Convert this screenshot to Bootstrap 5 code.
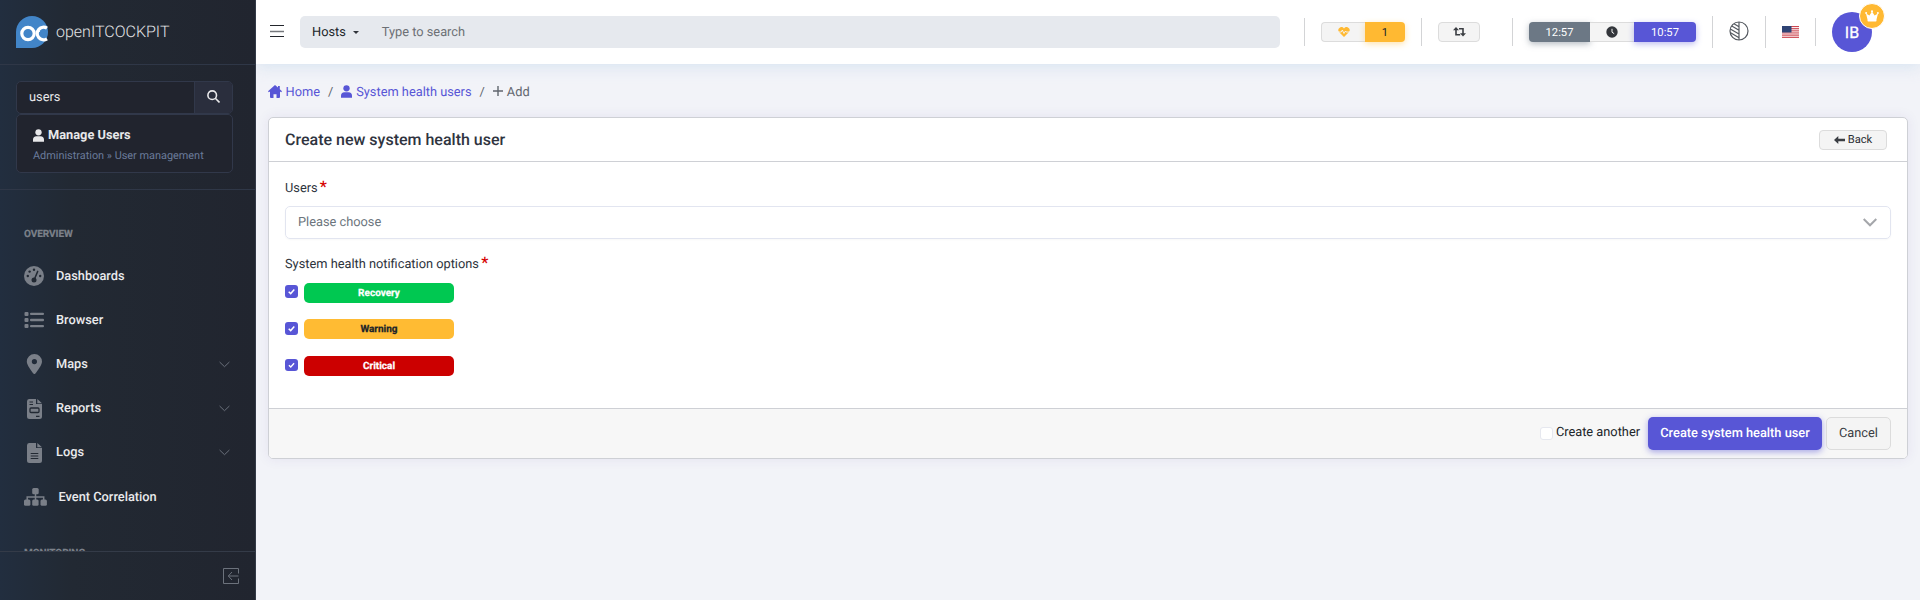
<!DOCTYPE html>
<html lang="en">
<head>
<meta charset="utf-8">
<title>Create new system health user</title>
<link href="https://cdn.jsdelivr.net/npm/bootstrap@5.3.0/dist/css/bootstrap.min.css" rel="stylesheet">
<style>
body{font-family:Roboto,"Liberation Sans",sans-serif;font-size:12.8px;line-height:21px;letter-spacing:0;text-rendering:geometricPrecision;color:#212529;background:#f2f3f8;height:600px;overflow:hidden}
svg{display:block;flex:none}
.sidebar{position:relative;z-index:2;width:256px;height:600px;flex:none;background:linear-gradient(90deg,#222e3f 0,#222933 72px,#21252f 100%);border-right:1px solid #343a47;color:#e8e8ea}
.brand{height:65px;border-bottom:1px solid #2f3747;padding:16px 16px 17px}
.brand span{font-size:16px;margin-left:8px;letter-spacing:0;color:#e3e4e6;font-weight:300}
.filter{height:125px;padding:16px 22px 0 16px;border-bottom:1px solid #2f3747}
.filter .field{height:33px;border:1px solid #31384a;border-radius:5px;overflow:hidden;background:#21242e}
.filter .go{width:38px;background:#2a2e3d;border-left:1px solid #31384a}
.filter .result{height:59px;border:1px solid #31384a;border-radius:5px;background:#21242e;padding:11px 16px}
.result small{font-size:10.9px;color:#6a7b9a;line-height:16px}
.menu{height:361px;overflow:hidden;padding-top:36px}
.cap{font-size:10px;font-weight:700;color:#7c818a;padding-left:24px;line-height:18px;-webkit-text-stroke:.2px;letter-spacing:-.05px}
.menu .entry{height:44.2px;padding:0 25px 0 24px;color:#e9eaec;text-decoration:none;font-weight:500;letter-spacing:0}
.entry .ic{width:32px;color:#7a7f88}
.entry .chev{color:#6a707b}
.foot{height:49px;border-top:1px solid #343b48;padding:0 16px}
.topbar{height:64px;background:#fff;box-shadow:0 3px 14px rgba(186,210,232,.45);padding:0 36px 0 14px;position:relative}
.search{width:980px;height:32px;background:#e6e9ee;border-radius:5px;padding:0 12px;margin-left:16px}
.caret{border:3px solid transparent;border-top-color:#30343b;border-bottom:0;margin-left:7px}
.vr-line{width:1px;height:28px;background:#d3d4d6}
.tall{height:32px}
.pill{height:20px;font-size:11.2px;border-radius:4px;font-weight:400}
.lite{background:#f4f4f4;border:1px solid #dcdcdc;color:#3b3e43}
.avatar{width:40px;height:40px;background:#5856d6;color:#fff;font-size:16px;font-weight:400;border-radius:50%;position:relative}
.crown{position:absolute;left:27px;top:-9px;width:26px;height:26px;background:#ffb932;border:1px solid #fff;border-radius:50%}
.crumbs{height:20px;margin:18px 0 0 12px;color:#61666e}
.crumbs a{color:#5856d6;text-decoration:none}
.panel{margin:15px 12px 0;height:342px;border:1px solid #ced0d5;border-radius:5px;background:#fff;box-shadow:0 0 13px rgba(62,44,140,.08);overflow:hidden}
.phead{height:44px;border-bottom:1px solid #ced0d5;padding:0 20px 0 16px}
.phead h1{font-size:16px;font-weight:500;margin:0;color:#2f3440;letter-spacing:0}
.pbody{height:246px;padding:16px}
.pbody label{height:20px;line-height:21px;color:#2d333c;display:block}
.ast{color:#d60000;font-size:16px;line-height:0;font-weight:500;position:relative;top:0;margin-left:-1px}
.choose{height:33px;border:1px solid #e2e5f0;border-radius:5px;padding:0 13px 1px 12px;color:#6c757d;margin-top:8px;box-shadow:0 1px 2px rgba(0,0,0,.03)}
.box{width:13px;height:13px;border-radius:3px;background:#5856d6}
.tag{width:150px;height:20px;border-radius:5px;margin-left:6px;font-size:10px;font-weight:700;-webkit-text-stroke:.25px}
.pfoot{height:50px;background:#f7f7f7;border-top:1px solid #ced0d5;padding:0 16px}
.act{height:33px;border-radius:5px;font-weight:500;letter-spacing:0}
</style>
<script src="https://cdn.jsdelivr.net/npm/bootstrap@5.3.0/dist/js/bootstrap.bundle.min.js"></script>
</head>
<body>
<div class="d-flex">
<aside class="sidebar">
  <div class="brand d-flex align-items-center">
    <svg width="32" height="32" viewBox="0 0 32 32"><path d="M16 0a16 16 0 1 1 0 32H0V16A16 16 0 0 1 16 0" fill="#4285c8"/><circle cx="12" cy="17.5" r="6.2" fill="none" stroke="#fff" stroke-width="3.2"/><path d="M31 12.2a6.3 6.3 0 1 0 0 10.6" fill="none" stroke="#fff" stroke-width="3.2"/><path d="M18.2 15v5M20 15.3h4M22 15.3v5" stroke="#fff" stroke-width="1"/></svg>
    <span>openITCOCKPIT</span>
  </div>
  <div class="filter">
    <div class="field d-flex"><div class="flex-grow-1 d-flex align-items-center ps-2"><span class="ms-1">users</span></div>
      <div class="go d-flex align-items-center justify-content-center"><svg width="13" height="13" viewBox="0 0 13 13" fill="none" stroke="#e8e8ea" stroke-width="1.6" style="margin-top:-2px"><circle cx="5.2" cy="5.2" r="4.3"/><path d="m8.3 8.3 4.2 4.2"/></svg></div></div>
    <div class="result">
      <div class="d-flex align-items-center fw-bold" style="height:18px"><svg width="11" height="13" viewBox="0 0 14 16" fill="currentColor" style="margin-right:4px"><circle cx="7" cy="4" r="4"/><path d="M0 16v-2.500a4.500 4.500 0 0 1 4.500-4.500h5a4.500 4.500 0 0 1 4.500 4.500V16z"/></svg>Manage Users</div>
      <small class="d-block mt-1">Administration » User management</small>
    </div>
  </div>
  <nav class="menu">
    <div class="cap">OVERVIEW</div>
    <div style="height:10px"></div>
    <a class="entry d-flex align-items-center"><span class="ic"><svg width="20" height="20" viewBox="0 0 20 20"><circle cx="10" cy="10" r="10" fill="currentColor"/><g fill="#222933"><circle cx="3.800" cy="10" r="1.200"/><circle cx="5.600" cy="5.600" r="1.200"/><circle cx="10" cy="3.800" r="1.200"/><circle cx="16.200" cy="10" r="1.200"/><circle cx="10" cy="14" r="2.500"/></g><path d="m10.500 13 3.200-7.600" stroke="#222933" stroke-width="1.500" stroke-linecap="round"/></svg></span>Dashboards</a>
    <a class="entry d-flex align-items-center"><span class="ic"><svg width="20" height="18" viewBox="0 0 20 18" fill="currentColor"><rect x=".5" y="1" width="4" height="4" rx="1"/><rect x=".5" y="7" width="4" height="4" rx="1"/><rect x=".5" y="13" width="4" height="4" rx="1"/><rect x="6" y="1.700" width="14" height="2.400" rx="1"/><rect x="6" y="7.800" width="14" height="2.400" rx="1"/><rect x="6" y="13.900" width="14" height="2.400" rx="1"/></svg></span>Browser</a>
    <a class="entry d-flex align-items-center"><span class="ic"><svg width="20" height="20" viewBox="0 0 20 20" fill="currentColor"><path fill-rule="evenodd" d="M11.400 19.600C13.400 17.100 18 11 18 7.600a7.600 7.600 0 0 0-15.200 0c0 3.400 4.600 9.500 6.600 12q1 1 2 0zM10.400 5a2.600 2.600 0 1 1 0 5.200 2.600 2.600 0 0 1 0-5.200"/></svg></span>Maps<svg class="chev ms-auto" width="11" height="7" viewBox="0 0 11 7" fill="none" stroke="currentColor"><path d="m.6 1 4.900 4.700L10.400 1"/></svg></a>
    <a class="entry d-flex align-items-center"><span class="ic"><svg width="20" height="20" viewBox="0 0 20 20"><path d="M5 0h7v5h6v12.500a2.500 2.500 0 0 1-2.500 2.500h-10A2.500 2.500 0 0 1 3 17.500v-15A2.500 2.500 0 0 1 5 0M13.300 0 18 4.200h-4.700z" fill="currentColor"/><path d="M5.500 3H9M5.500 5.500H9M12 17.300h3.500" stroke="#222933" stroke-width="1.200"/><rect x="6" y="9" width="9" height="4.500" rx="1" fill="none" stroke="#222933" stroke-width="1.300"/></svg></span>Reports<svg class="chev ms-auto" width="11" height="7" viewBox="0 0 11 7" fill="none" stroke="currentColor"><path d="m.6 1 4.900 4.700L10.400 1"/></svg></a>
    <a class="entry d-flex align-items-center"><span class="ic"><svg width="20" height="20" viewBox="0 0 20 20"><path d="M5 0h7v5h6v12.500a2.500 2.500 0 0 1-2.500 2.500h-10A2.500 2.500 0 0 1 3 17.500v-15A2.500 2.500 0 0 1 5 0M13.300 0 18 4.200h-4.700z" fill="currentColor"/><path d="M6.700 10.500h7.600M6.700 13h7.600M6.700 15.500h7.600" stroke="#222933" stroke-width="1.200"/></svg></span>Logs<svg class="chev ms-auto" width="11" height="7" viewBox="0 0 11 7" fill="none" stroke="currentColor"><path d="m.6 1 4.900 4.700L10.400 1"/></svg></a>
    <a class="entry d-flex align-items-center"><span class="ic" style="width:34.500px"><svg width="23" height="18" viewBox="0 0 23 18" fill="currentColor"><rect x="8.200" width="6.500" height="6.300" rx="1.500"/><rect y="11.500" width="6.400" height="6.300" rx="1.500"/><rect x="8.200" y="11.500" width="6.400" height="6.300" rx="1.500"/><rect x="16.500" y="11.500" width="6.400" height="6.300" rx="1.500"/><path d="M3.200 12V9h16.500v3M11.500 5v7" fill="none" stroke="currentColor" stroke-width="1.500"/></svg></span>Event Correlation</a>
    <div style="height:26px"></div>
    <div class="cap">MONITORING</div>
  </nav>
  <div class="foot d-flex align-items-center justify-content-end"><svg width="16" height="16" viewBox="0 0 16 16" fill="none" stroke="#6c727c"><path d="M15.500 5.500v-5H.5v15h15v-5M15.500 8H5.500M9 4 5.300 8 9 12"/></svg></div>
</aside>
<div class="flex-grow-1" style="min-width:0">
  <header class="topbar d-flex align-items-center">
    <svg width="14" height="14" viewBox="0 0 14 14" stroke="#23262c" style="margin-top:-3px"><path d="M0 1.500h14M0 12.500h14"/><path d="M0 7.500h14" stroke="#75787d" stroke-width="1.500"/></svg>
    <div class="search d-flex align-items-center"><span style="color:#212529">Hosts</span><span class="caret"></span><span style="margin-left:23px;color:#6c7075">Type to search</span></div>
    <span class="vr-line" style="margin-left:24px"></span>
    <div class="d-flex" style="margin-left:16px"><span class="pill lite rounded-end-0 d-flex align-items-center justify-content-center" style="width:44px;border-right:0"><svg width="12" height="10" viewBox="0 0 12 10"><path d="M6 10 1 5A3 3 0 0 1 6 1.400 3 3 0 0 1 11 5z" fill="#ffb932"/><path d="M0 5h3.300l1-2 1.700 3.500L7.500 4l.5 1h4" fill="none" stroke="#f4f4f4" stroke-width=".9"/></svg></span><span class="pill rounded-start-0 d-flex align-items-center justify-content-center" style="width:40px;background:#ffb932;color:#212529;box-shadow:0 2px 6px rgba(255,185,50,.4)">1</span></div>
    <span class="vr-line" style="margin-left:16px"></span>
    <span class="pill lite d-flex align-items-center justify-content-center" style="width:42px;margin-left:16px"><svg width="13" height="10" viewBox="0 0 13 10" fill="#3b3e43"><path d="M3 0 6 3.300H3.800v3.800H7.200v1.500H2.200V3.300H0zM10 9.500 7 6.200h2.200V2.400H6V.9h4.800v5.300H13z"/></svg></span>
    <span class="vr-line" style="margin-left:32px"></span>
    <div class="d-flex" style="margin-left:16px"><span class="pill rounded-end-0 text-white d-flex align-items-center justify-content-center" style="width:61px;background:#6c7885;box-shadow:0 2px 6px rgba(108,120,133,.5)">12:57</span><span class="pill lite rounded-0 border-start-0 border-end-0 d-flex align-items-center justify-content-center" style="width:44px"><svg width="12" height="12" viewBox="0 0 12 12"><circle cx="6" cy="6" r="5.700" fill="#33363b"/><path d="M6 2.800V6.200l2.200 1.500" fill="none" stroke="#f4f4f4"/></svg></span><span class="pill rounded-start-0 text-white d-flex align-items-center justify-content-center" style="width:62px;background:#5856d6;box-shadow:0 2px 6px rgba(88,86,214,.4)">10:57</span></div>
    <span class="vr-line tall" style="margin-left:16px"></span>
    <svg width="20" height="20" viewBox="0 0 20 20" fill="none" stroke="#545960" stroke-width="1.200" style="margin:-3px 0 0 16px"><circle cx="10" cy="10" r="9"/><path d="M10 1v18M5 2.800l5 3M2.800 5l7.200 4.300M1.300 8l8.700 5M1.200 11.500 10 16.700"/></svg>
    <span class="vr-line tall" style="margin-left:16px"></span>
    <svg width="17" height="12" viewBox="0 0 17 12" style="margin-left:16px"><rect width="17" height="12" fill="#fff"/><path d="M0 .5h17M0 2.400h17M0 4.200h17M0 6.100h17M0 8h17M0 9.800h17M0 11.600h17" stroke="#cc4650"/><rect width="9.500" height="6.500" fill="#2e4374"/></svg>
    <span class="vr-line" style="margin-left:16px"></span>
    <div class="avatar d-flex align-items-center justify-content-center" style="margin-left:16px;-webkit-text-stroke:.3px">IB<span class="crown d-flex align-items-center justify-content-center"><svg width="14" height="12" viewBox="0 0 14 12" fill="#fff"><path d="m2.500 9.500-1.500-6 3.400 2L7 1.500l2.600 4 3.400-2-1.500 6v1.300a.7.700 0 0 1-.7.700H3.200a.7.700 0 0 1-.7-.7z"/><circle cx="7" cy="1.300" r="1.100"/><circle cx="1.100" cy="3" r="1"/><circle cx="12.900" cy="3" r="1"/></svg></span></div>
  </header>
  <nav class="crumbs d-flex align-items-center">
    <a class="d-flex align-items-center"><svg width="14" height="13" viewBox="0 0 14 13" fill="currentColor" style="margin:-2px 3.500px 0 0"><path d="M7 0 0 6.200l.8 1L2 6.500V12a1 1 0 0 0 1 1h2.500V9.200h3V13H11a1 1 0 0 0 1-1V6.500l1.200.7.800-1-2.200-2V1H10v1.600z"/></svg>Home</a>
    <span style="margin:0 8px">/</span>
    <a class="d-flex align-items-center"><svg width="11" height="13" viewBox="0 0 14 16" fill="currentColor" style="margin:-2px 4px 0 0"><circle cx="7" cy="4" r="4"/><path d="M0 16v-2.500a4.500 4.500 0 0 1 4.500-4.500h5a4.500 4.500 0 0 1 4.500 4.500V16z"/></svg>System health users</a>
    <span style="margin:0 8px">/</span>
    <svg width="10" height="10" viewBox="0 0 10 10" stroke="currentColor" stroke-width="1.400" style="margin:-2px 4px 0 0"><path d="M0 5h10M5 0v10"/></svg>Add
  </nav>
  <main class="panel">
    <div class="phead d-flex align-items-center justify-content-between"><h1>Create new system health user</h1>
      <span class="pill lite d-flex align-items-center justify-content-center" style="width:68px;color:#2b2e33"><svg width="11" height="8" viewBox="0 0 11 8" fill="#3b3e43" style="margin-right:3px"><path d="M0 4 4.300 0v2.700H11v2.600H4.300V8z"/></svg>Back</span></div>
    <div class="pbody">
      <label>Users <span class="ast">*</span></label>
      <div class="choose d-flex align-items-center justify-content-between">Please choose<svg width="14" height="9" viewBox="0 0 14 9" fill="none" stroke="#a5a7ab" stroke-width="2"><path d="m.7 1 6.300 6.300L13.300 1"/></svg></div>
      <label style="margin-top:15px">System health notification options <span class="ast">*</span></label>
      <div class="d-flex" style="margin-top:9px"><span class="box" style="margin-top:2px"><svg width="13" height="13" viewBox="0 0 13 13" fill="none" stroke="#fff" stroke-width="1.500"><path d="m3.700 6.700 2 1.900 3.600-4"/></svg></span><span class="tag text-white d-flex align-items-center justify-content-center" style="background:#00c851">Recovery</span></div>
      <div class="d-flex" style="margin-top:16px"><span class="box" style="margin-top:3px"><svg width="13" height="13" viewBox="0 0 13 13" fill="none" stroke="#fff" stroke-width="1.500"><path d="m3.700 6.700 2 1.900 3.600-4"/></svg></span><span class="tag d-flex align-items-center justify-content-center" style="background:#ffbb33">Warning</span></div>
      <div class="d-flex" style="margin-top:17px"><span class="box" style="margin-top:3px;height:12px"><svg width="13" height="12" viewBox="0 0 13 13" fill="none" stroke="#fff" stroke-width="1.500"><path d="m3.700 6.700 2 1.900 3.600-4"/></svg></span><span class="tag text-white d-flex align-items-center justify-content-center" style="background:#cc0000">Critical</span></div>
    </div>
    <div class="pfoot d-flex align-items-center justify-content-end">
      <span class="box bg-white" style="margin-right:3px;border:1px solid #e6e8ef"></span><span style="margin:-2px 8px 0 0">Create another</span>
      <span class="act text-white d-flex align-items-center justify-content-center" style="width:174px;background:#5856d6;box-shadow:0 2px 6px rgba(88,86,214,.5)">Create system health user</span>
      <span class="act lite d-flex align-items-center justify-content-center fw-normal" style="width:65px;margin-left:4px">Cancel</span>
    </div>
  </main>
</div>
</div>
</body>
</html>
